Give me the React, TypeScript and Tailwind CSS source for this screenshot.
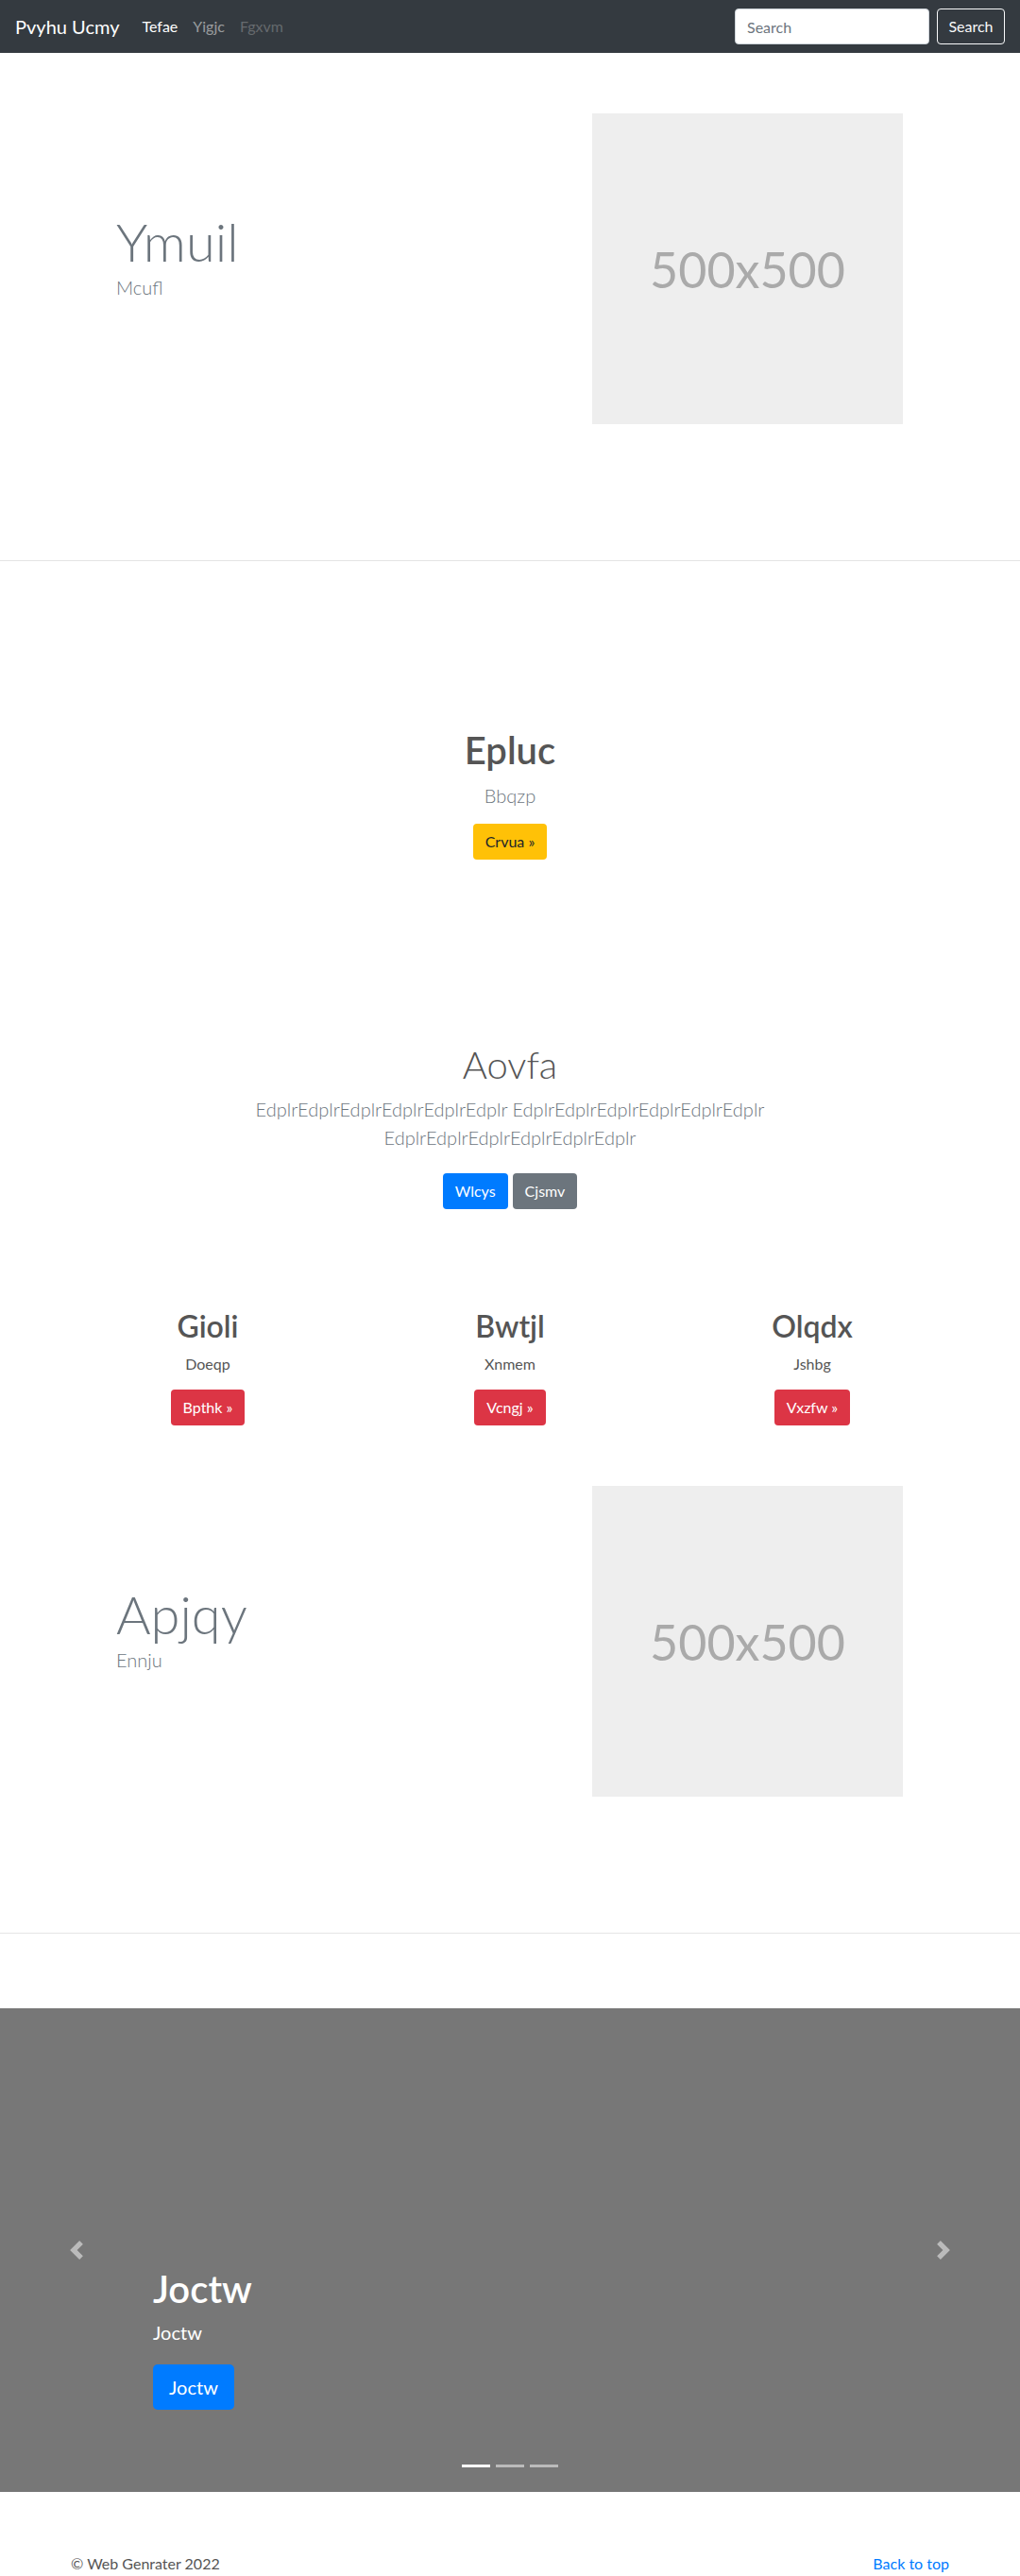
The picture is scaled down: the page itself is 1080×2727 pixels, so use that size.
import React from "react";

/* ── Pieces ─────────────────────────────────────────────── */

function Hero({ title, sub }: { title: string; sub: string }) {
  return (
    <section className="h-[538px] border-b border-[#e5e5e5]">
      <div className="mx-auto flex w-[960px] px-[15px]">
        <div className="w-[552px] pl-[48px] pt-[166px]">
          <h1 className="text-[56px] font-light leading-[1.2] text-[#6c757d]">{title}</h1>
          <p className="text-[20px] font-light leading-[30px] text-[#6c757d]">{sub}</p>
        </div>
        <div className="mt-[64px] flex h-[329px] w-[329px] items-center justify-center bg-[#eee] text-[52px] text-[#aaa]">
          500x500
        </div>
      </div>
    </section>
  );
}

function Col({ title, sub, cta }: { title: string; sub: string; cta: string }) {
  return (
    <div className="flex flex-col items-center">
      <h2 className="text-[32px] font-semibold leading-[38px] text-[#555]">{title}</h2>
      <p className="mt-[9px] text-[16px] leading-[24px] text-[#555]">{sub}</p>
      <button className="mt-[15px] h-[38px] rounded-[4px] bg-[#dc3545] px-[13px] text-[16px] text-white">
        {cta} »
      </button>
    </div>
  );
}

/* ── Page ───────────────────────────────────────────────── */

export default function App() {
  return (
    <div className="min-h-[2727px] bg-white pb-[16px] font-['Lato',sans-serif]">
      {/* Navbar */}
      <nav className="flex h-[56px] items-center bg-[#343a40] px-[16px]">
        <span className="mr-[16px] text-[20px] leading-[30px] text-white">Pvyhu Ucmy</span>
        <div className="flex text-[16px] leading-[24px]">
          <span className="px-[8px] text-white">Tefae</span>
          <span className="px-[8px] text-white/50">Yigjc</span>
          <span className="px-[8px] text-white/25">Fgxvm</span>
        </div>
        <div className="ml-auto flex items-center">
          <input
            placeholder="Search"
            className="h-[38px] w-[206px] rounded-[4px] border border-[#ced4da] bg-white px-[12px] text-[16px] outline-none placeholder:text-[#6c757d]"
          />
          <button className="ml-[8px] h-[38px] w-[72px] rounded-[4px] border border-[#f8f9fa] text-[16px] text-[#f8f9fa]">
            Search
          </button>
        </div>
      </nav>

      <Hero title="Ymuil" sub="Mcufl" />

      {/* Centered blocks */}
      <section className="flex flex-col items-center pt-[176px] text-center">
        <h1 className="text-[40px] font-semibold leading-[48px] text-[#555]">Epluc</h1>
        <p className="mt-[9px] text-[20px] font-light leading-[30px] text-[#6c757d]">Bbqzp</p>
        <button className="mt-[15px] h-[38px] rounded-[4px] bg-[#ffc107] px-[13px] text-[16px] text-[#212529]">
          Crvua »
        </button>

        <h1 className="mt-[193px] text-[40px] font-light leading-[48px] text-[#555]">Aovfa</h1>
        <p className="mt-[8px] text-[20px] font-light leading-[30px] text-[#6c757d]">
          <span className="block">EdplrEdplrEdplrEdplrEdplrEdplr EdplrEdplrEdplrEdplrEdplrEdplr</span>
          <span className="block">EdplrEdplrEdplrEdplrEdplrEdplr</span>
        </p>
        <div className="mt-[23px] flex gap-[5px]">
          <button className="h-[38px] rounded-[4px] bg-[#007bff] px-[13px] text-[16px] text-white">Wlcys</button>
          <button className="h-[38px] rounded-[4px] bg-[#6c757d] px-[13px] text-[16px] text-white">Cjsmv</button>
        </div>
      </section>

      <section className="mx-auto mt-[105px] grid w-[960px] grid-cols-3 text-center">
        <Col title="Gioli" sub="Doeqp" cta="Bpthk" />
        <Col title="Bwtjl" sub="Xnmem" cta="Vcngj" />
        <Col title="Olqdx" sub="Jshbg" cta="Vxzfw" />
      </section>

      <Hero title="Apjqy" sub="Ennju" />

      {/* Carousel */}
      <div className="relative mt-[79px] h-[512px] bg-[#777]">
        <div className="flex flex-col items-start pl-[162px] pt-[273px] text-white">
          <h1 className="text-[40px] font-semibold leading-[48px]">Joctw</h1>
          <p className="mt-[7px] text-[20px] leading-[30px]">Joctw</p>
          <button className="mt-[19px] h-[48px] rounded-[5px] bg-[#007bff] px-[17px] text-[20px] leading-[30px] text-white">
            Joctw
          </button>
        </div>

        <span className="absolute left-[71px] top-[246px] opacity-50">
          <svg width="20" height="20" viewBox="0 0 8 8" fill="#fff">
            <path d="M5.25 0l-4 4 4 4 1.5-1.5L4.25 4l2.5-2.5L5.25 0z" />
          </svg>
        </span>
        <span className="absolute right-[71px] top-[246px] opacity-50">
          <svg width="20" height="20" viewBox="0 0 8 8" fill="#fff">
            <path d="M2.75 0l-1.5 1.5L3.75 4l-2.5 2.5L2.75 8l4-4-4-4z" />
          </svg>
        </span>

        <div className="absolute bottom-[26px] left-0 right-0 flex justify-center gap-[6px]">
          <span className="h-[3px] w-[30px] bg-white" />
          <span className="h-[3px] w-[30px] bg-white/50" />
          <span className="h-[3px] w-[30px] bg-white/50" />
        </div>
      </div>

      {/* Footer */}
      <footer className="mx-auto mt-[64px] flex w-[960px] justify-between px-[15px] text-[16px] leading-[24px] text-[#555]">
        <p>© Web Genrater 2022</p>
        <a href="#" className="text-[#007bff]">
          Back to top
        </a>
      </footer>
    </div>
  );
}
